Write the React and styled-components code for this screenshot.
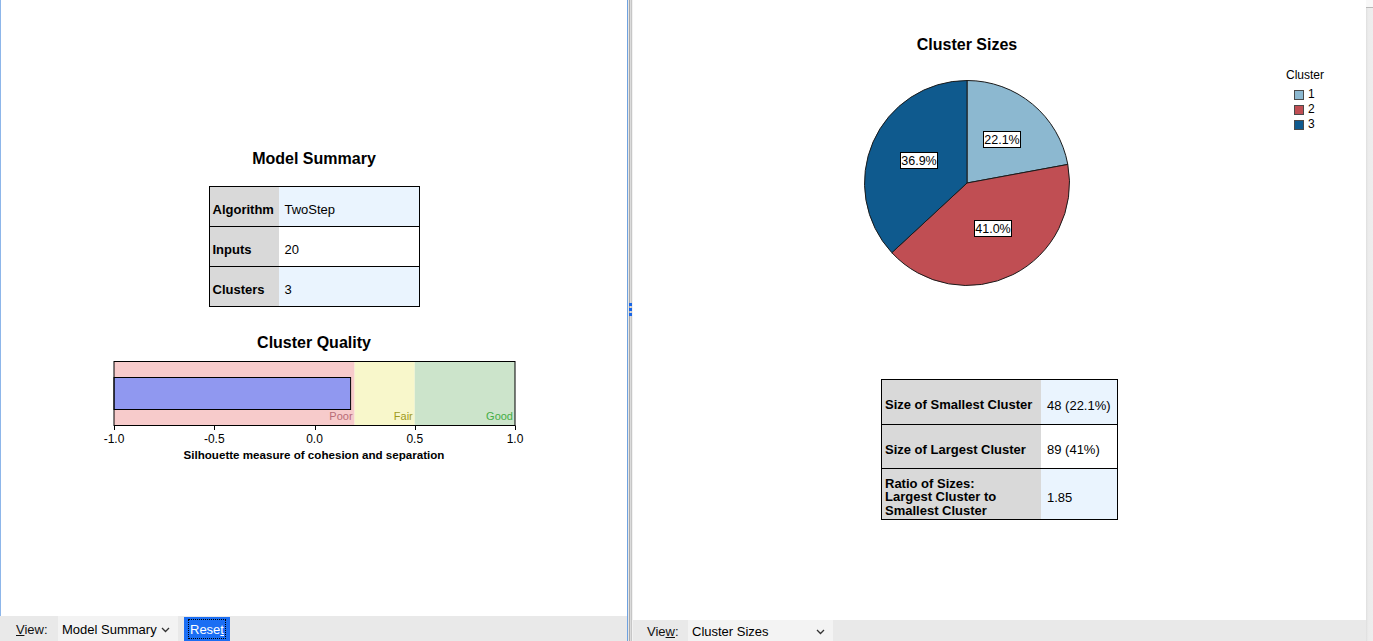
import React from "react";
import styled, { createGlobalStyle } from "styled-components";

const GlobalStyle = createGlobalStyle`
  html, body { margin: 0; padding: 0; background: #ffffff; overflow: hidden; }
  body { font-family: "Liberation Sans", Arial, sans-serif; color: #000; }
  * { box-sizing: border-box; }
`;

const Frame = styled.div`
  display: flex;
  width: 1373px;
  height: 641px;
`;

const Pane = styled.div`
  display: flex;
  flex-direction: column;
  flex: 0 0 ${(p) => p.$w}px;
  height: 100%;
`;

const LeftCanvas = styled.div`
  flex: 1;
  display: flex;
  flex-direction: column;
  align-items: center;
  padding-top: 149px;
  border-left: 1px solid #8db6ea;
  background: #fff;
`;

const RightCanvas = styled.div`
  flex: 1;
  display: flex;
  flex-direction: column;
  align-items: center;
  padding-top: 35px;
  background: #fff;
`;

const Title = styled.div`
  font-size: 16px;
  line-height: 19px;
  font-weight: bold;
  margin-top: ${(p) => p.$mt || 0}px;
`;

const Table = styled.div`
  margin-top: ${(p) => p.$mt}px;
  width: ${(p) => p.$w}px;
  border: 1px solid #000;
  display: flex;
  flex-direction: column;
`;

const Row = styled.div`
  display: grid;
  grid-template-columns: ${(p) => p.$cols};
  height: ${(p) => p.$h}px;
  & + & { border-top: 1px solid #000; box-sizing: content-box; }
`;

const LabelCell = styled.div`
  background: #d9d9d9;
  font-size: 13px;
  font-weight: bold;
  line-height: 13.5px;
  display: flex;
  align-items: center;
  padding-left: ${(p) => p.$pl}px;
  padding-top: 6px;
`;

const ValueCell = styled.div`
  background: ${(p) => (p.$tint ? "#eaf4fe" : "#ffffff")};
  font-size: 13px;
  display: flex;
  align-items: center;
  padding-left: 6px;
  padding-top: 6px;
`;

const QualitySvg = styled.svg`
  display: block;
  margin-top: 9px;
  font-family: "Liberation Sans", Arial, sans-serif;
`;

const AxisCaption = styled.div`
  font-size: 11.6px;
  font-weight: bold;
  line-height: 13px;
  margin-top: 2px;
`;

const ChartRow = styled.div`
  display: flex;
  width: 100%;
`;

const PieColumn = styled.div`
  flex: 0 0 653px;
  padding-left: 15px;
  display: flex;
  flex-direction: column;
  align-items: center;
`;

const PieSvg = styled.svg`
  display: block;
  margin-top: 24px;
  font-family: "Liberation Sans", Arial, sans-serif;
`;

const Legend = styled.div`
  padding-top: 33px;
  font-size: 12px;
`;

const LegendTitle = styled.div`
  line-height: 14px;
`;

const LegendList = styled.div`
  margin-top: 5px;
  padding-left: 8px;
  display: flex;
  flex-direction: column;
`;

const LegendItem = styled.div`
  display: flex;
  align-items: center;
  height: 15px;
  line-height: 15px;
`;

const Swatch = styled.span`
  width: 10px;
  height: 10px;
  background: ${(p) => p.$c};
  border: 1px solid #4a4a4a;
  margin-right: 4px;
`;

const Bar = styled.div`
  flex: 0 0 ${(p) => p.$h}px;
  display: flex;
  align-items: stretch;
  background: #e9e9e9;
  font-size: 13px;
  padding-left: ${(p) => p.$pl}px;
`;

const ViewLabel = styled.div`
  display: flex;
  align-items: center;
  padding-top: 2px;
  color: #111;
  width: ${(p) => p.$w}px;
`;

const Select = styled.div`
  display: flex;
  align-items: center;
  justify-content: space-between;
  width: ${(p) => p.$w}px;
  background: #f3f3f3;
  padding: 2px 8px 0 4px;
  color: #000;
`;

const Reset = styled.div`
  margin: 1px 0 0 6px;
  width: 46px;
  background: #1b6ef3;
  color: #fff;
  display: flex;
  align-items: center;
  justify-content: center;
`;

const FocusRing = styled.span`
  outline: 1px dotted #000;
  outline-offset: 0px;
  padding: 1px 1px 0;
  line-height: 17px;
`;

const Splitter = styled.div`
  flex: 0 0 6px;
  height: 100%;
  display: flex;
  flex-direction: column;
  justify-content: center;
  align-items: center;
  padding-bottom: 22px;
  padding-left: 1px;
  background: linear-gradient(
    to right,
    #6fa2e0 0px, #6fa2e0 1px,
    #e6e6e6 1px, #e6e6e6 2px,
    #a9a9a9 2px, #a9a9a9 3px,
    #dcdcdc 3px, #dcdcdc 4px,
    #c6c6c6 4px, #c6c6c6 5px,
    #f2f2f2 5px, #f2f2f2 6px
  );
`;

const GripDot = styled.span`
  width: 3px;
  height: 3px;
  background: #1a66e6;
  margin: 1px 0;
`;

const Scrollbar = styled.div`
  flex: 0 0 7px;
  height: 100%;
  display: flex;
  flex-direction: column;
  background: linear-gradient(to right, #dedede, #ececec 2px, #eeeeee);
`;

const ScrollCap = styled.div`
  height: 8px;
  background: #f8f8f8;
  border-bottom: 1px solid #b9b9b9;
`;

const Chevron = () => (
  <svg width="9" height="6" viewBox="0 0 9 6">
    <path d="M1 1 L4.5 4.5 L8 1" fill="none" stroke="#333" strokeWidth="1.3" />
  </svg>
);

const X0 = 15;
const SCALE = 200.5;
const xv = (v) => X0 + (v + 1) * SCALE;

const zones = [
  { from: -1, to: 0.2, fill: "#f7cbcb", label: "Poor", color: "#b86b78" },
  { from: 0.2, to: 0.5, fill: "#f8f7cb", label: "Fair", color: "#9f9b1c" },
  { from: 0.5, to: 1, fill: "#cce4cb", label: "Good", color: "#45ad45" },
];

const QualityChart = ({ value }) => (
  <QualitySvg width="430" height="85" viewBox="0 0 430 85">
    {zones.map((z) => (
      <g key={z.label}>
        <rect x={xv(z.from)} y="0.5" width={xv(z.to) - xv(z.from)} height="64" fill={z.fill} />
        <text x={xv(z.to) - 2} y="59" textAnchor="end" fontSize="11" fill={z.color}>
          {z.label}
        </text>
      </g>
    ))}
    <rect x={xv(-1)} y="16.5" width={xv(value) - xv(-1)} height="32" fill="#9098f0" stroke="#000" strokeWidth="1" />
    <rect x={xv(-1)} y="0.5" width={xv(1) - xv(-1)} height="64" fill="none" stroke="#000" strokeWidth="1" />
    {[-1, -0.5, 0, 0.5, 1].map((t) => (
      <g key={t}>
        <line x1={Math.round(xv(t)) + 0.5} x2={Math.round(xv(t)) + 0.5} y1="64.5" y2="69" stroke="#000" />
        <text x={xv(t)} y="82" textAnchor="middle" fontSize="12">
          {t.toFixed(1)}
        </text>
      </g>
    ))}
  </QualitySvg>
);

const slices = [
  { pct: 22.1, color: "#8cb8d0", label: { x: 121, y: 53 } },
  { pct: 41.0, color: "#c04e53", label: { x: 112, y: 142 } },
  { pct: 36.9, color: "#0f5a8e", label: { x: 38, y: 74 } },
];

const C = 105;
const R = 102.5;
const pt = (deg) => {
  const a = (deg * Math.PI) / 180;
  return [C + R * Math.sin(a), C - R * Math.cos(a)];
};

const PieChart = () => {
  let acc = 0;
  const paths = slices.map((s) => {
    const start = (acc / 100) * 360;
    acc += s.pct;
    const end = (acc / 100) * 360;
    const [x1, y1] = pt(start);
    const [x2, y2] = pt(end);
    const large = end - start > 180 ? 1 : 0;
    return {
      ...s,
      d: `M${C} ${C} L${x1} ${y1} A${R} ${R} 0 ${large} 1 ${x2} ${y2} Z`,
    };
  });
  return (
    <PieSvg width="210" height="210" viewBox="0 0 210 210">
      {paths.map((p) => (
        <path key={p.color} d={p.d} fill={p.color} stroke="#1a1a1a" strokeWidth="1" />
      ))}
      {paths.map((p) => (
        <g key={"l" + p.color}>
          <rect x={p.label.x + 0.5} y={p.label.y + 0.5} width="37" height="16" fill="#fff" stroke="#000" />
          <text x={p.label.x + 19} y={p.label.y + 13} textAnchor="middle" fontSize="12.5">
            {p.pct.toFixed(1)}%
          </text>
        </g>
      ))}
    </PieSvg>
  );
};

const summaryRows = [
  ["Algorithm", "TwoStep", true],
  ["Inputs", "20", false],
  ["Clusters", "3", true],
];

const sizeRows = [
  ["Size of Smallest Cluster", "48 (22.1%)", true, 44],
  ["Size of Largest Cluster", "89 (41%)", false, 43],
  [
    <>
      Ratio of Sizes:
      <br />
      Largest Cluster to
      <br />
      Smallest Cluster
    </>,
    "1.85",
    true,
    50,
  ],
];

export default function App() {
  return (
    <>
      <GlobalStyle />
      <Frame>
        <Pane $w={627}>
          <LeftCanvas>
            <Title>Model Summary</Title>
            <Table $mt={18} $w={211}>
              {summaryRows.map(([k, v, tint]) => (
                <Row key={k} $cols="69px 1fr" $h={39}>
                  <LabelCell $pl={3}>{k}</LabelCell>
                  <ValueCell $tint={tint}>{v}</ValueCell>
                </Row>
              ))}
            </Table>
            <Title $mt={26}>Cluster Quality</Title>
            <QualityChart value={0.18} />
            <AxisCaption>Silhouette measure of cohesion and separation</AxisCaption>
          </LeftCanvas>
          <Bar $h={25} $pl={16}>
            <ViewLabel $w={42}>
              <span>
                <u>V</u>iew:
              </span>
            </ViewLabel>
            <Select $w={120}>
              <span>Model Summary</span>
              <Chevron />
            </Select>
            <Reset>
              <FocusRing>
                Rese<u>t</u>
              </FocusRing>
            </Reset>
          </Bar>
        </Pane>
        <Splitter>
          <GripDot />
          <GripDot />
          <GripDot />
        </Splitter>
        <Pane $w={733}>
          <RightCanvas>
            <ChartRow>
              <PieColumn>
                <Title>Cluster Sizes</Title>
                <PieChart />
              </PieColumn>
              <Legend>
                <LegendTitle>Cluster</LegendTitle>
                <LegendList>
                  {slices.map((s, i) => (
                    <LegendItem key={s.color}>
                      <Swatch $c={s.color} />
                      {i + 1}
                    </LegendItem>
                  ))}
                </LegendList>
              </Legend>
            </ChartRow>
            <Table $mt={91} $w={237}>
              {sizeRows.map(([k, v, tint, h], i) => (
                <Row key={i} $cols="159px 1fr" $h={h}>
                  <LabelCell $pl={3}>
                    <span>{k}</span>
                  </LabelCell>
                  <ValueCell $tint={tint}>{v}</ValueCell>
                </Row>
              ))}
            </Table>
          </RightCanvas>
          <Bar $h={21} $pl={14}>
            <ViewLabel $w={41}>
              <span>
                Vie<u>w</u>:
              </span>
            </ViewLabel>
            <Select $w={145}>
              <span>Cluster Sizes</span>
              <Chevron />
            </Select>
          </Bar>
        </Pane>
        <Scrollbar>
          <ScrollCap />
        </Scrollbar>
      </Frame>
    </>
  );
}
